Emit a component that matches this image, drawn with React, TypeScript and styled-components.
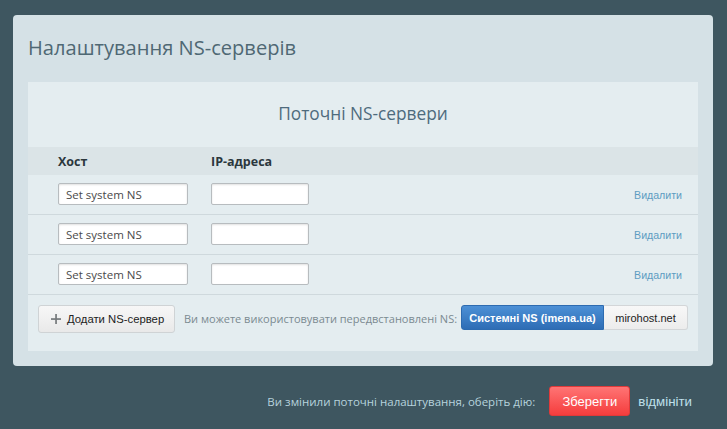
import React from "react";
import styled, { createGlobalStyle } from "styled-components";

const Global = createGlobalStyle`
  html, body { margin: 0; padding: 0; background: #3e5660; }
  body { font-family: "Open Sans", "Liberation Sans", sans-serif; }
  * { box-sizing: border-box; }
`;

const Page = styled.div`
  width: 727px;
  height: 429px;
  padding: 15px 14px 0 13px;
  display: flex;
  flex-direction: column;
`;

const Card = styled.div`
  background: #d5e1e6;
  border-radius: 4px;
  padding: 19px 15px 15px 15px;
  width: 700px;
`;

const Title = styled.h1`
  margin: 0 0 20px 0;
  font-family: "Open Sans", sans-serif;
  font-weight: 400;
  font-size: 20.1px;
  line-height: 28px;
  color: #4f6874;
`;

const Panel = styled.div`
  background: #e4edf0;
`;

const PanelHead = styled.div`
  height: 65px;
  display: flex;
  align-items: center;
  justify-content: center;
  font-size: 17.3px;
  color: #4e6b7d;
  padding-bottom: 2px;
`;

const HeadRow = styled.div`
  height: 28px;
  background: #dbe4e7;
  display: flex;
  align-items: center;
  padding-left: 30px;
  font-size: 12.5px;
  font-weight: 700;
  color: #2b373d;
`;

const HeadCell = styled.div<{ $w?: number }>`
  width: ${(p) => (p.$w ? `${p.$w}px` : "auto")};
`;

const Row = styled.div`
  height: 40px;
  border-bottom: 1px solid #cfd9dd;
  display: flex;
  align-items: center;
  padding: 0 16px 1px 30px;
`;

const Input = styled.input<{ $w: number }>`
  width: ${(p) => p.$w}px;
  height: 22px;
  border: 1px solid #b7bcbf;
  border-radius: 2px;
  background: #fff;
  box-shadow: inset 0 1px 2px rgba(0, 0, 0, 0.12);
  padding: 0 7px;
  font-family: "Open Sans", sans-serif;
  font-size: 11.5px;
  color: #4a4a4a;
  margin-right: 23px;
  outline: none;
`;

const DeleteLink = styled.a`
  margin-left: auto;
  font-family: "Liberation Sans", Arial, sans-serif;
  font-size: 10.6px;
  color: #5d9cc2;
  text-decoration: none;
  padding-top: 1px;
`;

const Footer = styled.div`
  display: flex;
  align-items: flex-start;
  padding: 10px 10px 0 10px;
  height: 56px;
`;

const AddButton = styled.button`
  flex-shrink: 0;
  height: 28px;
  width: 137px;
  display: flex;
  align-items: center;
  gap: 6px;
  padding: 0 0 0 12px;
  border: 1px solid #cfd3d5;
  border-radius: 3px;
  background: linear-gradient(#f7f7f7, #e9e9e9);
  font-family: "Liberation Sans", Arial, sans-serif;
  font-size: 11.3px;
  color: #222;
  white-space: nowrap;
  cursor: pointer;
`;

const Hint = styled.span`
  margin-left: 9px;
  line-height: 28px;
  font-size: 11px;
  color: #7b8a91;
  white-space: nowrap;
`;

const Group = styled.div`
  display: flex;
  margin-left: auto;
  height: 25px;
  flex-shrink: 0;
`;

const GroupButton = styled.button<{ $active?: boolean }>`
  height: 25px;
  padding: 0;
  width: ${(p) => (p.$active ? "143px" : "84px")};
  border: 1px solid ${(p) => (p.$active ? "#2d6bb0" : "#d3d6d8")};
  border-radius: ${(p) => (p.$active ? "3px 0 0 3px" : "0 3px 3px 0")};
  border-left-width: ${(p) => (p.$active ? "1px" : "0")};
  background: ${(p) =>
    p.$active ? "linear-gradient(#4c90d6, #2e6db5)" : "linear-gradient(#f8f8f8, #ececec)"};
  color: ${(p) => (p.$active ? "#fff" : "#222")};
  font-family: "Liberation Sans", Arial, sans-serif;
  font-size: 11px;
  font-weight: ${(p) => (p.$active ? 700 : 400)};
`;

const Bottom = styled.div`
  display: flex;
  align-items: center;
  justify-content: flex-end;
  padding: 20px 21px 0 0;
`;

const BottomText = styled.span`
  font-size: 11.5px;
  color: #b6d3dd;
  margin-right: 14px;
`;

const SaveButton = styled.button`
  height: 30px;
  width: 81px;
  border: 1px solid #e03a3a;
  border-radius: 3px;
  background: linear-gradient(#ff7474, #f53d3d);
  color: #fff;
  font-family: "Liberation Sans", Arial, sans-serif;
  font-size: 13px;
  padding: 0;
`;

const CancelLink = styled.a`
  margin-left: 8px;
  font-family: "Liberation Sans", Arial, sans-serif;
  font-size: 13.3px;
  color: #bfe0eb;
  text-decoration: none;
`;

const PlusIcon = () => (
  <svg width="10" height="10" viewBox="0 0 10 10">
    <rect x="4.2" y="0" width="1.7" height="10" fill="#75797c" />
    <rect x="0" y="4.2" width="10" height="1.7" fill="#75797c" />
  </svg>
);

const rows = [0, 1, 2];

export default function App() {
  return (
    <Page>
      <Global />
      <Card>
        <Title>Налаштування NS-серверів</Title>
        <Panel>
          <PanelHead>Поточні NS-сервери</PanelHead>
          <HeadRow>
            <HeadCell $w={153}>Хост</HeadCell>
            <HeadCell>IP-адреса</HeadCell>
          </HeadRow>
          {rows.map((i) => (
            <Row key={i}>
              <Input $w={130} defaultValue="Set system NS" />
              <Input $w={98} defaultValue="" />
              <DeleteLink href="#">Видалити</DeleteLink>
            </Row>
          ))}
          <Footer>
            <AddButton>
              <PlusIcon />
              Додати NS-сервер
            </AddButton>
            <Hint>Ви можете використовувати передвстановлені NS:</Hint>
            <Group>
              <GroupButton $active>Системні NS (imena.ua)</GroupButton>
              <GroupButton>mirohost.net</GroupButton>
            </Group>
          </Footer>
        </Panel>
      </Card>
      <Bottom>
        <BottomText>Ви змінили поточні налаштування, оберіть дію:</BottomText>
        <SaveButton>Зберегти</SaveButton>
        <CancelLink href="#">відмініти</CancelLink>
      </Bottom>
    </Page>
  );
}
